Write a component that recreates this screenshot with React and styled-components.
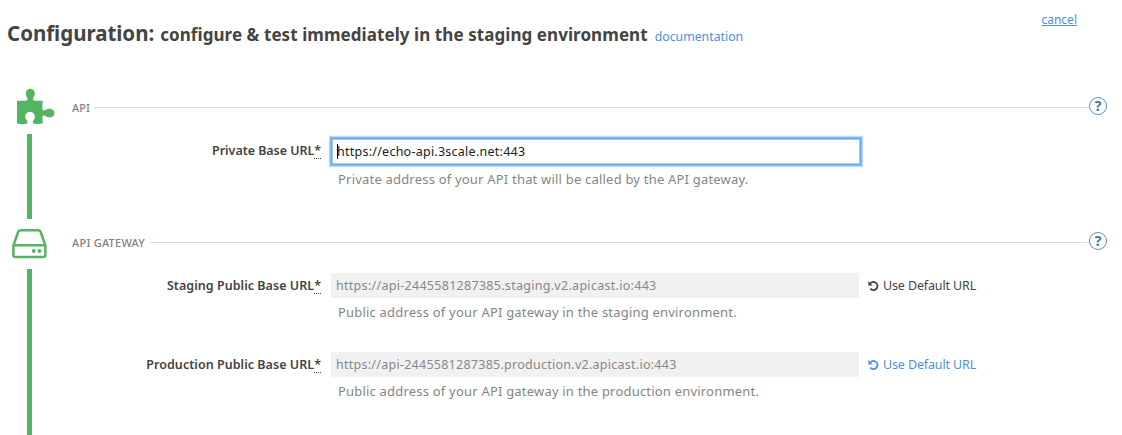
import React from 'react';
import styled, { createGlobalStyle } from 'styled-components';

const GlobalStyle = createGlobalStyle`
  * { box-sizing: border-box; }
  body {
    margin: 0;
    background: #fff;
    color: #444;
    font-family: "Noto Sans", "Open Sans", sans-serif;
    overflow: hidden;
  }
`;

const Page = styled.main`
  width: 1122px;
  height: 435px;
  overflow: hidden;
`;

const Header = styled.header`
  display: flex;
  justify-content: space-between;
  height: 86px;
  padding: 0 45px 0 7px;
`;

const Title = styled.h1`
  display: flex;
  align-items: baseline;
  height: 32px;
  margin: 17px 0 0;
  font-size: 20.5px;
  font-weight: 700;
  line-height: 32px;
  letter-spacing: -0.03px;
  white-space: nowrap;
`;

const Subtitle = styled.small`
  margin-left: 6px;
  font-size: 17px;
  letter-spacing: 0.07px;
`;

const Link = styled.a`
  color: #4a90e2;
  font-size: 12.3px;
  font-weight: 400;
  letter-spacing: 0;
  text-decoration: none;
`;

const DocLink = styled(Link)`
  margin-left: 7px;
`;

const CancelLink = styled(Link)`
  height: 18px;
  margin-top: 11px;
  font-size: 12px;
  line-height: 18px;
  text-decoration: underline;
`;

const Section = styled.section`
  display: grid;
  grid-template-columns: 72px 1fr;
  height: ${(p) => p.$height}px;
`;

const Rail = styled.div`
  display: flex;
  flex-direction: column;
`;

const RailIcon = styled.div`
  height: ${(p) => p.$height}px;
`;

const RailBar = styled.div`
  flex: 1;
  width: 5px;
  margin-left: 27px;
  background: #53b461;
`;

const Body = styled.div`
  padding-right: 15px;
`;

const Legend = styled.div`
  display: flex;
  align-items: center;
  height: 20px;
  margin-top: ${(p) => p.$top}px;
  margin-bottom: ${(p) => p.$bottom}px;
  color: #7f7f7f;
  font-size: 11px;
  font-weight: 500;
  line-height: 20px;
  white-space: nowrap;
`;

const LegendText = styled.span`
  position: relative;
  top: 2px;
  width: ${(p) => p.$width}px;
  letter-spacing: ${(p) => p.$track || 0}px;
`;

const Rule = styled.span`
  flex: 1;
  height: 1px;
  margin-top: 3px;
  background: #ddd;
`;

const Help = styled.span`
  width: 18px;
  height: 18px;
  border: 1px solid #5b8fc4;
  border-radius: 50%;
  color: #4277b0;
  font-size: 14px;
  font-weight: 700;
  line-height: 16px;
  text-align: center;
`;

const Field = styled.div`
  display: grid;
  grid-template-columns: 249px 529px auto;
  column-gap: 10px;
  height: ${(p) => p.$height}px;
`;

const Label = styled.label`
  height: 26px;
  font-size: 12.5px;
  font-weight: 600;
  line-height: 26px;
  letter-spacing: ${(p) => p.$track}px;
  text-align: right;
  white-space: nowrap;
`;

const Required = styled.abbr`
  display: inline-block;
  height: 17px;
  line-height: 17px;
  border-bottom: 1px dotted #444;
  text-decoration: none;
`;

const Value = styled.div`
  display: flex;
  align-items: center;
  width: 528px;
  height: 25px;
  padding-left: 5px;
  background: #f1f1f1;
  color: #888;
  font-size: 12.5px;
  letter-spacing: ${(p) => p.$track || 0}px;
  white-space: nowrap;
`;

const FocusedValue = styled(Value)`
  width: 530px;
  height: 27px;
  background: #fff;
  border: 1px solid #64a6f0;
  color: #222;
  box-shadow: 0 0 0 1px #8abef7, 0 0 1px 2px #b9d9fb, inset 0 0 0 1px #a5cdf8;
`;

const Caret = styled.span`
  width: 1px;
  height: 15px;
  margin-right: -1px;
  background: #000;
`;

const Hint = styled.p`
  height: 20px;
  margin: ${(p) => p.$top}px 0 0 7px;
  color: #858585;
  font-size: 13px;
  line-height: 20px;
  letter-spacing: 0.2px;
  white-space: nowrap;
`;

const ResetButton = styled.a`
  display: flex;
  align-items: center;
  height: 25px;
  margin-left: -2px;
  color: ${(p) => p.$color};
  font-size: 12.5px;
  letter-spacing: -0.13px;
  gap: 4px;
  white-space: nowrap;
`;

const PuzzleIcon = () => (
  <svg width="72" height="48" viewBox="0 86 72 48" fill="#53b461">
    <path d="M17 100.7h7.6q2.9 0 3-1.2.1-.8-.4-1.7c-.6-1-1.4-2.3-1.4-4.2 0-3 1.9-4.8 4.5-4.8s4.5 1.8 4.5 4.8c0 1.9-.9 3.2-1.4 4.2q-.5.9-.4 1.7.1 1.2 2.6 1.2h7.1c-.3 3-.5 5.5-.2 8.2.2 1.5 1.5 1.8 2.8 1.2 1.3-.7 2.3-1.4 4.1-1.4 3 0 5 1.8 5 4.4s-1.8 4.4-4.8 4.4c-2.3 0-3.5-1.2-4.9-1.8-1.5-.4-2.3.2-2.3 1.7-.1 2.1.2 4.1.5 6.2-3 .3-6 .8-8.7.2-2.1-.6-1.4-2.6-.3-4 2.1-2.4.8-8-3.8-8-4.4 0-6.1 4.8-3.8 7.8 1.3 1.7 2 3.7-.1 4.2-2.6.6-6.2.3-9.2-.2Z" />
  </svg>
);

const DriveIcon = () => (
  <svg width="72" height="50" viewBox="0 219 72 50" fill="none" stroke="#53b461" strokeWidth="2.5" strokeLinejoin="round">
    <path d="M13.4 245.6 18.1 232q.6-1.8 2.6-1.8h17.4q2 0 2.6 1.8l4.7 13.6V255q0 1.9-1.9 1.9H15.3q-1.9 0-1.9-1.9ZM13.8 245.3h31.2" />
    <g fill="#53b461" stroke="none">
      <circle cx="33.7" cy="251" r="1.9" />
      <circle cx="39.5" cy="251" r="1.9" />
    </g>
  </svg>
);

const UndoIcon = () => (
  <svg width="11" height="12" viewBox="0 0 11 12" fill="none" stroke="currentColor" strokeWidth="1.8">
    <path d="M2.1 3.5C3.1 2.4 4.3 1.9 5.5 1.9a4.1 4.1 0 1 1-3.2 6.8" />
    <path d="M.3 1v4.4h4.4Z" fill="currentColor" stroke="none" />
  </svg>
);

const FieldLabel = ({ children, track = 0.04 }) => (
  <Label $track={track}>
    {children}
    <Required title="required">*</Required>
  </Label>
);

export default function App() {
  return (
    <Page>
      <GlobalStyle />
      <Header>
        <Title>
          Configuration:
          <Subtitle>configure &amp; test immediately in the staging environment</Subtitle>
          <DocLink>documentation</DocLink>
        </Title>
        <CancelLink>cancel</CancelLink>
      </Header>

      <Section $height={133}>
        <Rail>
          <RailIcon $height={48}><PuzzleIcon /></RailIcon>
          <RailBar />
        </Rail>
        <Body>
          <Legend $top={10} $bottom={22}>
            <LegendText $width={22}>API</LegendText>
            <Rule />
            <Help>?</Help>
          </Legend>
          <Field $height={60}>
            <FieldLabel track={-0.05}>Private Base URL</FieldLabel>
            <div>
              <FocusedValue $track={0.25}><Caret />https://echo-api.3scale.net:443</FocusedValue>
              <Hint $top={4}>Private address of your API that will be called by the API gateway.</Hint>
            </div>
          </Field>
        </Body>
      </Section>

      <Section $height={216}>
        <Rail>
          <RailIcon $height={50}><DriveIcon /></RailIcon>
          <RailBar />
        </Rail>
        <Body>
          <Legend $top={12} $bottom={22}>
            <LegendText $width={78} $track={0.25}>API GATEWAY</LegendText>
            <Rule />
            <Help>?</Help>
          </Legend>
          <Field $height={79}>
            <FieldLabel>Staging Public Base URL</FieldLabel>
            <div>
              <Value $track={0.29}>https://api-2445581287385.staging.v2.apicast.io:443</Value>
              <Hint $top={4}>Public address of your API gateway in the staging environment.</Hint>
            </div>
            <ResetButton $color="#444"><UndoIcon />Use Default URL</ResetButton>
          </Field>
          <Field $height={79}>
            <FieldLabel>Production Public Base URL</FieldLabel>
            <div>
              <Value $track={0.26}>https://api-2445581287385.production.v2.apicast.io:443</Value>
              <Hint $top={4}>Public address of your API gateway in the production environment.</Hint>
            </div>
            <ResetButton $color="#4a90e2"><UndoIcon />Use Default URL</ResetButton>
          </Field>
        </Body>
      </Section>
    </Page>
  );
}
